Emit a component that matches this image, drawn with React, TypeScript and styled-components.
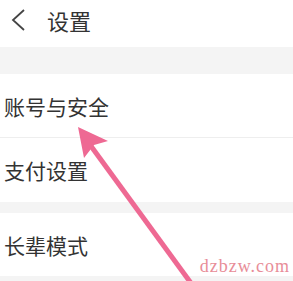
import React from 'react';
import styled, { createGlobalStyle } from 'styled-components';

const GlobalStyle = createGlobalStyle`
  html, body {
    margin: 0;
    padding: 0;
    background: #ffffff;
  }
  body {
    font-family: "Noto Sans CJK SC", "Noto Sans", sans-serif;
    color: #333333;
  }
`;

const Page = styled.div`
  position: relative;
  width: 293px;
  height: 281px;
  overflow: hidden;
  background: #f4f4f4;
`;

const Header = styled.div`
  display: flex;
  align-items: center;
  height: 47px;
  background: #ffffff;
  padding-left: 11px;
  gap: 20px;
`;

const BackIcon = styled.svg`
  width: 16px;
  height: 24px;
  margin-top: -8px;
`;

const Title = styled.div`
  font-size: 22px;
  line-height: 1;
  color: #333333;
  margin-top: -8px;
`;

const Gap = styled.div<{ h: number }>`
  height: ${({ h }) => h}px;
  background: #f4f4f4;
`;

const Group = styled.div`
  background: #ffffff;
`;

const Row = styled.div<{ h: number; divider?: boolean }>`
  display: flex;
  align-items: center;
  height: ${({ h }) => h}px;
  padding-left: 4px;
  font-size: 21px;
  color: #333333;
  border-bottom: ${({ divider }) => (divider ? '1px solid #eeeeee' : 'none')};
  box-sizing: border-box;
`;

const Overlay = styled.svg`
  position: absolute;
  left: 0;
  top: 0;
  pointer-events: none;
`;

const Watermark = styled.div`
  position: absolute;
  right: 3px;
  bottom: 4px;
  font-family: "Liberation Serif", serif;
  font-size: 18px;
  letter-spacing: 1px;
  color: #e88d98;
`;

export default function App() {
  return (
    <>
      <GlobalStyle />
      <Page>
        <Header>
          <BackIcon viewBox="0 0 16 24">
            <path d="M13 2 L2 12 L13 22" fill="none" stroke="#444" strokeWidth="1.8" />
          </BackIcon>
          <Title>设置</Title>
        </Header>
        <Gap h={27} />
        <Group>
          <Row h={64} divider>账号与安全</Row>
          <Row h={64}>支付设置</Row>
        </Group>
        <Gap h={11} />
        <Group>
          <Row h={63}>长辈模式</Row>
        </Group>
        <Overlay width="293" height="281" viewBox="0 0 293 281">
          <line x1="88" y1="142" x2="196" y2="290" stroke="#ee6993" strokeWidth="5" />
          <polygon points="78,127 108,141 94,145 84,158" fill="#ee6993" />
        </Overlay>
        <Watermark>dzbzw.com</Watermark>
      </Page>
    </>
  );
}
